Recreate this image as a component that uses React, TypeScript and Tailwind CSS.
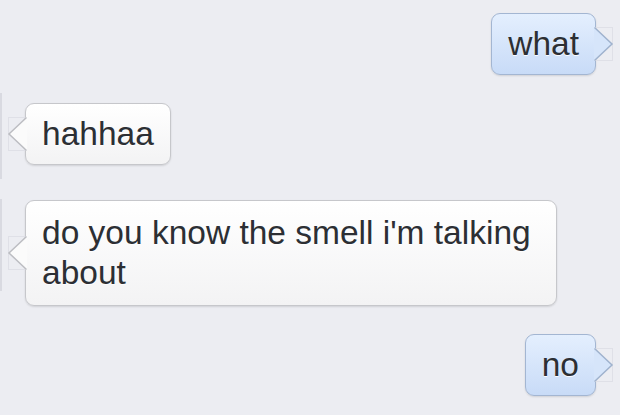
import React from 'react';

type Side = 'left' | 'right';

interface Message {
  side: Side;
  text: string;
  multi?: boolean;
  line?: string; // faint rule at the left edge of incoming rows
}

const messages: Message[] = [
  { side: 'right', text: 'what' },
  { side: 'left', text: 'hahhaa', line: 'top-[-10px] bottom-[-14px]' },
  { side: 'left', text: "do you know the smell i'm talking about", multi: true, line: 'top-[-1px] bottom-[15px]' },
  { side: 'right', text: 'no' },
];

// small chevron tail, drawn the way the old chat themes did it
const Tail: React.FC<{ side: Side }> = ({ side }) => {
  const blue = side === 'right';
  const fill = blue ? '#d6e5fa' : '#fbfbfb';
  const stroke = blue ? '#9fb2cd' : '#bcbdc2';
  return (
    <svg
      width="20"
      height="36"
      viewBox="0 0 20 36"
      className={`absolute top-1/2 -translate-y-1/2 ${side === 'left' ? '-left-[19px]' : '-right-[19px] -scale-x-100'}`}
    >
      <path d="M1 1.5 H19 M1 34.5 H19 M1.5 1 V35" stroke="#dfe0e7" strokeWidth="1" fill="none" />
      <polygon points="20,1 2,18 20,35" fill={fill} />
      <polyline points="19.5,1.5 2,18 19.5,34.5" stroke={stroke} strokeWidth="1.5" fill="none" />
    </svg>
  );
};

const Bubble: React.FC<{ msg: Message }> = ({ msg }) => {
  const blue = msg.side === 'right';
  return (
    <div
      className={`relative rounded-[9px] border px-[16px] text-[33.5px] leading-[40px] text-[#2c2f34] [text-shadow:0_1px_0_rgba(255,255,255,0.9)] shadow-[0_1px_2px_rgba(0,0,0,0.12)] ${
        msg.multi ? 'py-[12px] max-w-[532px]' : 'py-[10px]'
      } ${
        blue
          ? 'border-[#a3b6d2] bg-gradient-to-b from-[#e4effe] to-[#c8dbf7]'
          : 'border-[#c6c7cb] bg-gradient-to-b from-white to-[#f3f3f4]'
      }`}
    >
      {msg.text}
      <Tail side={msg.side} />
    </div>
  );
};

export default function App() {
  return (
    <div className="w-[620px] h-[415px] overflow-hidden bg-[#ecedf2] pt-[13px] font-['Helvetica','Liberation_Sans',Arial,sans-serif]">
      {messages.map((msg, i) => (
        <div
          key={i}
          className={`relative flex ${msg.side === 'right' ? 'justify-end pr-[24px]' : 'justify-start pl-[25px]'} ${
            i === 0 ? '' : i === 2 ? 'mt-[35px]' : 'mt-[28px]'
          }`}
        >
          {msg.line && <span className={`absolute left-0 w-[2px] bg-[#d9dae1] ${msg.line}`} />}
          <Bubble msg={msg} />
        </div>
      ))}
    </div>
  );
}
